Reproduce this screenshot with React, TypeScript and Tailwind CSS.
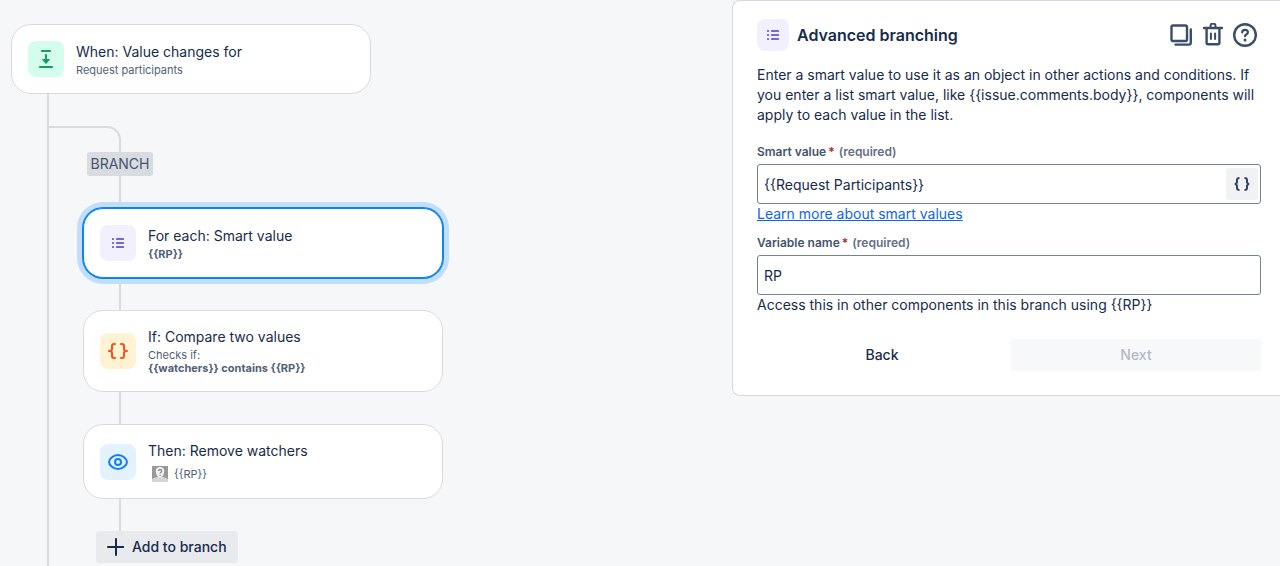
import React from "react";
import clsx from "clsx";

interface StepCardProps {
  title: string;
  icon: React.ReactNode;
  iconClassName: string;
  selected?: boolean;
  children: React.ReactNode;
}

const ListIcon = () => (
  <svg width="16" height="16" viewBox="0 0 16 16" fill="#7468d4" aria-hidden="true">
    {[3, 7, 11].map((y) => (
      <React.Fragment key={y}>
        <rect x="2" y={y} width="2" height="2" rx="0.5" />
        <rect x="6" y={y} width="8" height="2" rx="0.6" />
      </React.Fragment>
    ))}
  </svg>
);

const ValueChangeIcon = () => (
  <svg width="24" height="24" viewBox="0 0 24 24" fill="#159a68" aria-hidden="true">
    <rect x="7" y="3" width="10" height="2" rx="0.8" />
    <rect x="5" y="19" width="14" height="2" rx="0.8" />
    <path d="M11 7.6c0-.8 2-.8 2 0V12h2.2c.6 0 .8.6.4 1l-3 3.500c-.3.4-.9.4-1.200 0l-3-3.500c-.4-.4-.2-1 .4-1H11z" />
  </svg>
);

const BracesIcon = () => (
  <svg
    width="24"
    height="24"
    viewBox="0 0 24 24"
    fill="none"
    stroke="#f15322"
    strokeWidth="2"
    strokeLinecap="round"
    strokeLinejoin="round"
    aria-hidden="true"
  >
    <path d="M9 5H8Q6 5 6 7V10Q6 12 3 12Q6 12 6 14V17Q6 19 8 19H9" />
    <path d="M15 5H16Q18 5 18 7V10Q18 12 21 12Q18 12 18 14V17Q18 19 16 19H15" />
  </svg>
);

const EyeIcon = () => (
  <svg
    width="24"
    height="24"
    viewBox="0 0 24 24"
    fill="none"
    stroke="#0c7ff2"
    strokeWidth="2"
    aria-hidden="true"
  >
    <path d="M3 12C3 9.500 7 5 12 5S21 9.500 21 12S17 19 12 19S3 14.500 3 12Z" />
    <circle cx="12" cy="12" r="3" />
  </svg>
);

const UnknownUserIcon = () => (
  <svg width="16" height="16" viewBox="0 0 16 16" aria-hidden="true">
    <rect width="16" height="16" fill="#999999" />
    <path d="M0 16V13.500C1 12 4 11.500 5.500 10.800H10.500C12 11.500 15 12 16 13.500V16Z" fill="#d6d6d6" />
    <path d="M8 1C10.900 1 12.300 2.700 12.200 5.200C12.100 8 10.500 11.500 8 11.500S3.900 8 3.800 5.200C3.700 2.700 5.100 1 8 1Z" fill="#f2f2f2" />
    <path d="M6.500 5C6.500 3 9.700 3 9.700 5C9.700 6.200 8.100 6.200 8.100 7.500" fill="none" stroke="#8c8c8c" strokeWidth="1.3" />
    <circle cx="8.1" cy="9.2" r="0.8" fill="#8c8c8c" />
  </svg>
);

const CopyIcon = () => (
  <svg width="24" height="24" viewBox="0 0 24 24" fill="none" stroke="currentColor" strokeWidth="2.4" strokeLinecap="round" aria-hidden="true">
    <rect x="2.5" y="2.5" width="15.5" height="15.5" rx="1.6" />
    <path d="M21.8 6.500V19.500Q21.800 21.600 19.700 21.600H6.500" />
  </svg>
);

const TrashIcon = () => (
  <svg width="24" height="24" viewBox="0 0 24 24" fill="none" stroke="currentColor" strokeWidth="2.4" strokeLinecap="round" aria-hidden="true">
    <path d="M3 5H21" />
    <path d="M9.500 4.500V3Q9.500 0.500 12 0.500T14.500 3V4.500" strokeWidth="2" />
    <path d="M5.600 6V19.800Q5.600 21.200 7 21.200H17Q18.400 21.200 18.400 19.800V6" />
    <path d="M9.900 10.500V16M14.100 10.500V16" strokeWidth="2" />
  </svg>
);

const HelpIcon = () => (
  <svg width="24" height="24" viewBox="0 0 24 24" fill="none" stroke="currentColor" strokeWidth="2.4" strokeLinecap="round" aria-hidden="true">
    <circle cx="12" cy="12" r="10.8" />
    <path d="M9.200 9.400C9.200 7.800 10.400 6.800 12 6.800S14.900 7.800 14.900 9.300C14.900 11.500 12 11.400 12 13.200" strokeWidth="2.2" />
    <circle cx="12" cy="16.9" r="1.5" fill="currentColor" stroke="none" />
  </svg>
);

const EditorBracesIcon = () => (
  <svg width="16" height="16" viewBox="0 0 16 16" fill="none" stroke="#344563" strokeWidth="2" strokeLinejoin="round" aria-hidden="true">
    <path d="M5.500 2Q3 2 3 4V6.500L1.500 8L3 9.500V12Q3 14 5.500 14" />
    <path d="M10.500 2Q13 2 13 4V6.500L14.500 8L13 9.500V12Q13 14 10.500 14" />
  </svg>
);

const Connector = () => <div className="ml-9 h-8 w-0.5 bg-[#d8dbe0]" />;

const StepCard: React.FC<StepCardProps> = ({
  title,
  icon,
  iconClassName,
  selected,
  children,
}) => (
  <div
    className={clsx(
      "flex w-[360px] items-center gap-3 rounded-[20px] border bg-white p-4",
      selected
        ? "relative border-[#0a86f0] shadow-[0_0_0_1px_#0a86f0,0_0_0_6px_#c2defc]"
        : "border-[#d8dbe0]"
    )}
  >
    <div
      className={clsx(
        "flex size-9 shrink-0 items-center justify-center rounded-lg",
        iconClassName
      )}
    >
      {icon}
    </div>
    <div>
      <h3 className="text-sm/5">{title}</h3>
      <div className="mt-0.5 text-[11px]/[13px] text-[#505f79]">{children}</div>
    </div>
  </div>
);

interface FieldProps {
  id: string;
  label: string;
  value: string;
  action?: React.ReactNode;
}

const Field: React.FC<FieldProps> = ({ id, label, value, action }) => (
  <>
    <label htmlFor={id} className="block text-xs/4 font-semibold text-[#44546f]">
      {label}
      <span className="ml-0.5 text-[#ae2a19]">*</span>
      <span className="ml-1 text-[#626f86]">(required)</span>
    </label>
    <div className="mt-1 flex h-10 items-center rounded-[3px] border border-[#758195] bg-white pr-0.5">
      <input
        id={id}
        type="text"
        required
        defaultValue={value}
        className="h-full min-w-0 flex-1 bg-transparent px-1.5 text-sm outline-none"
      />
      {action}
    </div>
  </>
);

export default function App() {
  return (
    <div className="flex min-h-screen items-stretch justify-between bg-[#f6f7f9] font-['Inter',sans-serif] text-[#172b4d]">
      <main className="flex flex-col pt-6 pl-[11px]">
        <StepCard
          title="When: Value changes for"
          icon={<ValueChangeIcon />}
          iconClassName="bg-[#d5fdee]"
        >
          Request participants
        </StepCard>

        <div className="ml-9 flex-1 border-l-2 border-[#d8dbe0] pt-8">
          <div className="h-[26px] w-[72px] rounded-tr-[14px] border-t-2 border-r-2 border-[#d8dbe0]" />
          <div className="ml-[34px]">
            <div className="ml-1 flex h-6 w-[66px] items-center justify-center rounded-[3px] bg-[#d8dbe0] text-sm text-[#44546f]">
              BRANCH
            </div>
            <Connector />
            <StepCard
              title="For each: Smart value"
              icon={<ListIcon />}
              iconClassName="bg-[#f2effe]"
              selected
            >
              <strong className="font-bold">{"{{RP}}"}</strong>
            </StepCard>
            <Connector />
            <StepCard
              title="If: Compare two values"
              icon={<BracesIcon />}
              iconClassName="bg-[#fff3d3]"
            >
              <p>Checks if:</p>
              <p className="font-bold">{"{{watchers}} contains {{RP}}"}</p>
            </StepCard>
            <Connector />
            <StepCard
              title="Then: Remove watchers"
              icon={<EyeIcon />}
              iconClassName="bg-[#e4f1ff]"
            >
              <div className="flex items-center gap-1.5 pt-[3px] pl-1">
                <UnknownUserIcon />
                <span>{"{{RP}}"}</span>
              </div>
            </StepCard>
            <Connector />
            <button
              type="button"
              className="ml-[13px] flex h-8 w-[142px] items-center gap-2 rounded-[3px] bg-[#e8eaed] pl-2.5 text-sm font-medium"
            >
              <svg width="18" height="18" viewBox="0 0 18 18" stroke="currentColor" strokeWidth="2" strokeLinecap="round" aria-hidden="true">
                <path d="M10 1v16M2 9h16" />
              </svg>
              Add to branch
            </button>
          </div>
        </div>
      </main>

      <aside className="w-[548px] self-start rounded-l-lg border border-r-0 border-[#d5d9df] bg-white pt-[18px] pr-[19px] pb-6 pl-6">
        <header className="flex items-center gap-2">
          <div className="flex size-8 items-center justify-center rounded-lg bg-[#f2effe]">
            <ListIcon />
          </div>
          <h2 className="flex-1 text-base font-semibold">Advanced branching</h2>
          <div className="flex gap-2 pr-1 text-[#3b4d69]">
            <button type="button" aria-label="Duplicate">
              <CopyIcon />
            </button>
            <button type="button" aria-label="Delete">
              <TrashIcon />
            </button>
            <button type="button" aria-label="Help">
              <HelpIcon />
            </button>
          </div>
        </header>

        <p className="mt-3.5 text-sm/5">
          {
            "Enter a smart value to use it as an object in other actions and conditions. If you enter a list smart value, like {{issue.comments.body}}, components will apply to each value in the list."
          }
        </p>

        <form className="mt-[19px]">
          <Field
            id="smart-value"
            label="Smart value"
            value="{{Request Participants}}"
            action={
              <button
                type="button"
                aria-label="Insert smart value"
                className="flex size-8 items-center justify-center rounded-[3px] bg-[#f1f2f4]"
              >
                <EditorBracesIcon />
              </button>
            }
          />
          <a href="#" className="block text-sm/5 text-[#0c66e4] underline">
            Learn more about smart values
          </a>
          <div className="mt-[11px]">
            <Field id="variable-name" label="Variable name" value="RP" />
            <p className="text-sm/5">
              {"Access this in other components in this branch using {{RP}}"}
            </p>
          </div>
          <div className="mt-6 grid grid-cols-2 gap-1">
            <button type="button" className="h-8 rounded-[3px] text-sm font-medium">
              Back
            </button>
            <button
              type="button"
              disabled
              className="h-8 rounded-[3px] bg-[#f7f8f9] text-sm font-medium text-[#b3b9c4]"
            >
              Next
            </button>
          </div>
        </form>
      </aside>
    </div>
  );
}
